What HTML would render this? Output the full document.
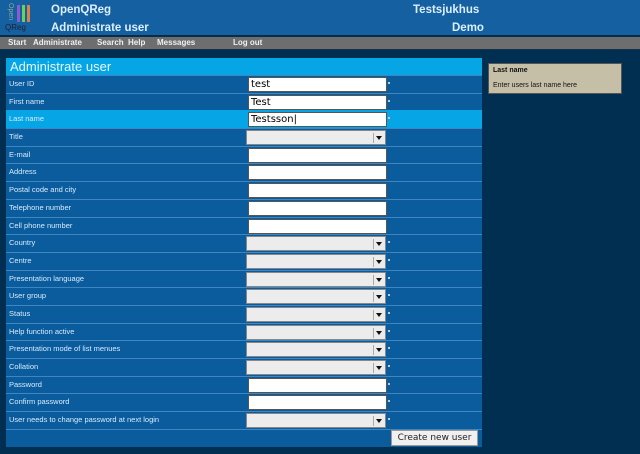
<!DOCTYPE html>
<html><head><style>
*{margin:0;padding:0;box-sizing:border-box}
body{width:640px;height:454px;background:#002f52;font-family:"Liberation Sans",sans-serif;position:relative;overflow:hidden}
.hdr{position:absolute;left:0;top:0;width:640px;height:36px;background:#1560a0;border-bottom:1px solid #0b2a44}
.hdr b{position:absolute;color:#dcefff;font-size:11.5px;font-weight:bold}
.nav{position:absolute;left:0;top:37px;width:640px;height:13px;background:#6e6e6e;border-bottom:1px solid #12314a}
.nav span{position:absolute;top:1px;color:#f0f0f0;font-size:8px;font-weight:bold}
.panel{position:absolute;left:6px;top:58px;width:476px;height:389px;background:#0a5c9c}
.title{height:17px;background:#06a6e6;color:#e8f8ff;font-size:13px;padding-left:4px;line-height:17px}
.row{height:17.7px;border-top:1px solid #3f86c0;position:relative;color:#d8ecff;font-size:7.5px;line-height:16px;padding-left:3px}
.row.hl{background:#06a6e6;border-top-color:#06a6e6}
.in{position:absolute;left:242px;top:1px;width:139px;height:15px;background:#fff;border:1px solid #555;font-family:"DejaVu Sans",sans-serif;font-size:10px;color:#000;line-height:13px;padding-left:2px}
.sel{position:absolute;left:240px;top:1px;width:140px;height:15px;background:#ececec;border:1px solid #888}
.sel:after{content:"";position:absolute;right:3px;top:5px;border-left:3px solid transparent;border-right:3px solid transparent;border-top:4px solid #111}
.sel:before{content:"";position:absolute;right:11px;top:2px;height:10px;border-left:1px solid #aaa}
.dot{position:absolute;left:382px;top:6px;width:2px;height:2px;background:#bcd}
.btn{position:absolute;left:385px;top:372px;width:87px;height:16px;background:#f0f0f0;border:1px solid #999;font-family:"DejaVu Sans",sans-serif;font-size:9px;color:#222;text-align:center;line-height:14px}
.help{position:absolute;left:488px;top:63px;width:134px;height:31px;background:#c6bfa8;border:1px solid #555;font-size:7px;color:#111;padding:3px 4px}
</style></head><body>
<div class="hdr">
 <div style="position:absolute;top:3px;color:#8a9;font-size:7px;transform:rotate(90deg);transform-origin:left top;left:14px">Open</div>
 <div style="position:absolute;left:17px;top:5px;width:3px;height:17px;background:#8a5cd0"></div>
 <div style="position:absolute;left:22px;top:5px;width:3px;height:17px;background:#6cd060"></div>
 <div style="position:absolute;left:27px;top:5px;width:3px;height:17px;background:#e08040"></div>
 <div style="position:absolute;left:5px;top:23px;color:#223;font-size:8px">QReg</div>
 <b style="left:51px;top:4px">OpenQReg</b>
 <b style="left:51px;top:22px">Administrate user</b>
 <b style="left:413px;top:4px">Testsjukhus</b>
 <b style="left:452px;top:22px">Demo</b>
</div>
<div class="nav"><span style="left:8px">Start</span><span style="left:33px">Administrate</span><span style="left:97px">Search</span><span style="left:128px">Help</span><span style="left:157px">Messages</span><span style="left:233px">Log out</span></div>
<div class="panel">
<div class="title">Administrate user</div>
<div class="row">User ID<div class="in">test</div><div class="dot"></div></div>
<div class="row">First name<div class="in">Test</div><div class="dot"></div></div>
<div class="row hl">Last name<div class="in">Testsson|</div><div class="dot"></div></div>
<div class="row">Title<div class="sel"></div></div>
<div class="row">E-mail<div class="in"></div></div>
<div class="row">Address<div class="in"></div></div>
<div class="row">Postal code and city<div class="in"></div></div>
<div class="row">Telephone number<div class="in"></div></div>
<div class="row">Cell phone number<div class="in"></div></div>
<div class="row">Country<div class="sel"></div><div class="dot"></div></div>
<div class="row">Centre<div class="sel"></div><div class="dot"></div></div>
<div class="row">Presentation language<div class="sel"></div><div class="dot"></div></div>
<div class="row">User group<div class="sel"></div><div class="dot"></div></div>
<div class="row">Status<div class="sel"></div><div class="dot"></div></div>
<div class="row">Help function active<div class="sel"></div><div class="dot"></div></div>
<div class="row">Presentation mode of list menues<div class="sel"></div><div class="dot"></div></div>
<div class="row">Collation<div class="sel"></div><div class="dot"></div></div>
<div class="row">Password<div class="in"></div><div class="dot"></div></div>
<div class="row">Confirm password<div class="in"></div><div class="dot"></div></div>
<div class="row">User needs to change password at next login<div class="sel"></div><div class="dot"></div></div>
<div class="row"></div>
<div class="btn">Create new user</div>
</div>
<div class="help"><b>Last name</b><div style="margin-top:8px">Enter users last name here</div></div>
</body></html>
